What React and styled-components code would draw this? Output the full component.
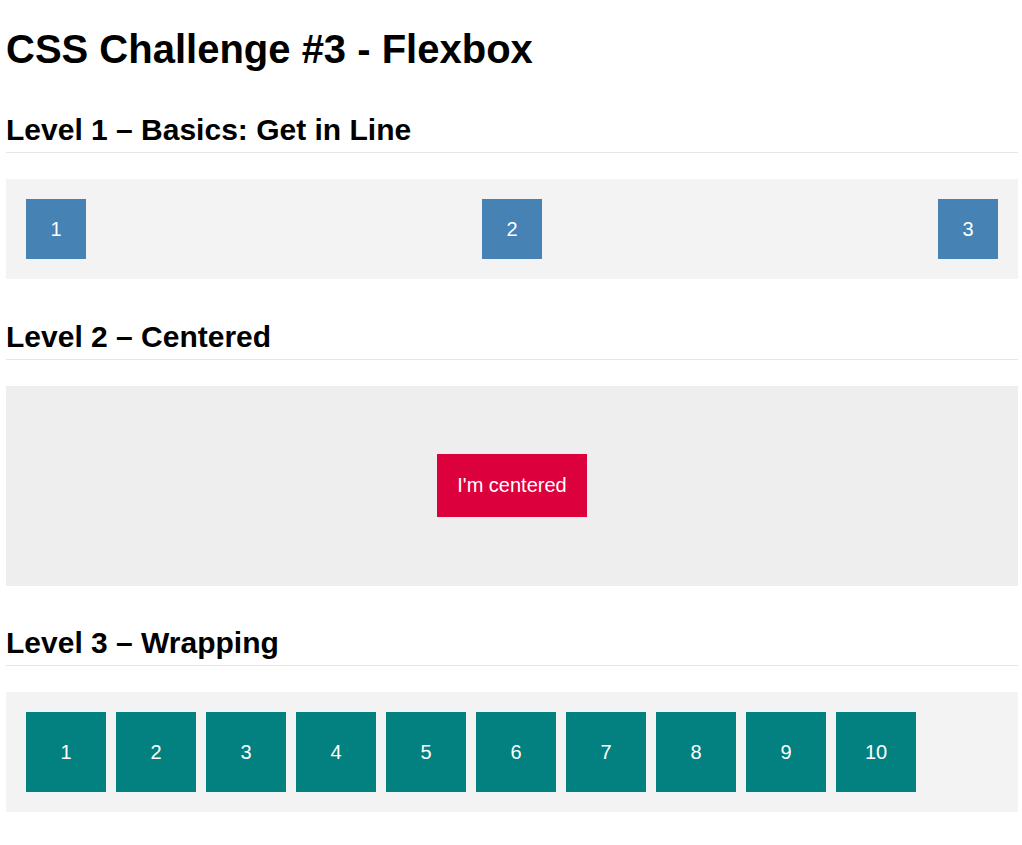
import React from "react";
import styled, { createGlobalStyle } from "styled-components";

const Global = createGlobalStyle`
  html, body { margin: 0; padding: 0; background: #ffffff; }
  body { font-family: "Liberation Sans", Arial, Helvetica, sans-serif; color: #000; }
`;

const Page = styled.main`
  padding: 0 4px 8px 6px;
`;

const Title = styled.h1`
  margin: 26px 0 41px;
  font-size: 40px;
  line-height: 46px;
  font-weight: 700;
`;

const Section = styled.section`
  & + & { margin-top: 40.5px; }
`;

const Heading = styled.h2`
  margin: 0 0 26px;
  font-size: 30px;
  line-height: 34px;
  font-weight: 700;
  padding-bottom: 5px;
  border-bottom: 1px solid #e6e6e6;
`;

const Box = styled.div`
  display: flex;
  background: ${(p) => p.$bg || "#f3f3f3"};
  padding: 20px;
  box-sizing: border-box;
  height: ${(p) => p.$height || "auto"};
  justify-content: ${(p) => p.$justify || "flex-start"};
  align-items: ${(p) => p.$align || "stretch"};
  flex-wrap: ${(p) => (p.$wrap ? "wrap" : "nowrap")};
  gap: ${(p) => p.$gap || "0"};
`;

const Item = styled.div`
  width: ${(p) => p.$size}px;
  height: ${(p) => p.$size}px;
  background: ${(p) => p.$color};
  color: #fff;
  font-size: 20px;
  display: flex;
  align-items: center;
  justify-content: center;
  flex: none;
`;

const Centered = styled.div`
  background: #dc003d;
  color: #fff;
  font-size: 20px;
  line-height: 23px;
  padding: 20px 20px;
`;

export default function App() {
  return (
    <>
      <Global />
      <Page>
        <Title>CSS Challenge #3 - Flexbox</Title>

        <Section>
          <Heading>Level 1 – Basics: Get in Line</Heading>
          <Box $justify="space-between" $align="flex-start">
            {[1, 2, 3].map((n) => (
              <Item key={n} $size={60} $color="#4682b4">{n}</Item>
            ))}
          </Box>
        </Section>

        <Section>
          <Heading>Level 2 – Centered</Heading>
          <Box $bg="#eeeeee" $height="200px" $justify="center" $align="center">
            <Centered>I'm centered</Centered>
          </Box>
        </Section>

        <Section>
          <Heading>Level 3 – Wrapping</Heading>
          <Box $wrap $gap="10px" $align="flex-start">
            {[1, 2, 3, 4, 5, 6, 7, 8, 9, 10].map((n) => (
              <Item key={n} $size={80} $color="#038180">{n}</Item>
            ))}
          </Box>
        </Section>
      </Page>
    </>
  );
}
